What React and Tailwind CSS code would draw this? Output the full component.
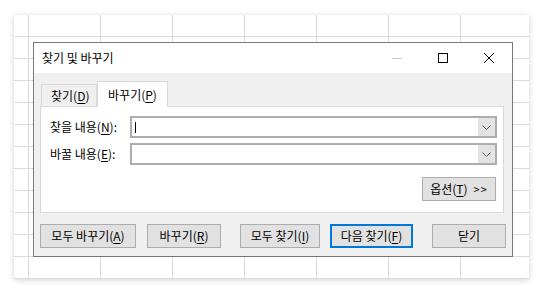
const cells = Array.from({ length: 12 * 8 });

// Underlined access key, like (N)
const Key = ({ k }) => (
  <>
    (<span className="underline underline-offset-[2px]">{k}</span>)
  </>
);

const Combo = ({ cursor }) => (
  <div className="flex h-[22px] w-[368px] border-2 border-[#adadad] bg-white">
    <div className="flex flex-1 items-center pl-[3px]">
      {cursor && <div className="h-[11px] w-px bg-black" />}
    </div>
    <div className="flex w-[17px] items-center justify-center bg-[#e3e3e3]">
      <svg width="9" height="5" viewBox="0 0 9 5">
        <path d="M0.5 0.5 L4.5 4.5 L8.5 0.5" fill="none" stroke="#606060" strokeWidth="1" />
      </svg>
    </div>
  </div>
);

const Button = ({ className, children }) => (
  <button className={`flex h-[24px] items-center justify-center border border-[#adadad] bg-[#e1e1e1] text-[12px] ${className}`}>
    {children}
  </button>
);

const App = () => {
  return (
    <div className="relative h-[295px] w-[545px] overflow-hidden bg-white pl-[14px] pt-[15px] font-['Noto_Sans_CJK_KR',sans-serif] text-black">
      {/* sheet behind the dialog */}
      <div className="h-[264px] w-[515px] overflow-hidden bg-white shadow-[0_1px_6px_rgba(0,0,0,0.18)]">
        <div className="grid grid-cols-[15px_repeat(7,72px)] grid-rows-[repeat(12,22px)]">
          {cells.map((_, i) => (
            <div key={i} className="border-b border-r border-[#dadada]" />
          ))}
        </div>
      </div>

      {/* dialog */}
      <div className="absolute left-[33px] top-[42px] flex h-[215px] w-[480px] flex-col border border-[#777777] bg-[#f0f0f0]">
        <div className="flex h-[30px] items-center bg-white">
          <span className="flex-1 pl-[8px] text-[12px]">찾기 및 바꾸기</span>
          <div className="flex h-full w-[46px] items-center justify-center">
            <div className="h-px w-[10px] bg-[#cccccc]" />
          </div>
          <div className="flex h-full w-[46px] items-center justify-center">
            <div className="h-[10px] w-[10px] border border-black" />
          </div>
          <div className="flex h-full w-[46px] items-center justify-center">
            <svg width="10" height="10" viewBox="0 0 10 10">
              <path d="M0 0 L10 10 M10 0 L0 10" stroke="black" strokeWidth="1" />
            </svg>
          </div>
        </div>

        <div className="flex-1 px-[6px] pt-[8px]">
          {/* tabs */}
          <div className="flex h-[25px] items-end pl-px">
            <div className="flex h-[22px] w-[56px] items-center border border-b-0 border-[#d9d9d9] pl-[9px] text-[12px]">
              찾기<Key k="D" />
            </div>
            <div className="relative z-10 -mb-px flex h-[26px] w-[71px] items-center justify-center border border-b-0 border-[#d9d9d9] bg-white text-[12px]">
              바꾸기<Key k="P" />
            </div>
          </div>

          {/* panel */}
          <div className="flex h-[107px] w-[464px] flex-col border border-[#d9d9d9] bg-white pl-[9px] pr-[6px] pt-[9px]">
            <div className="flex items-center">
              <span className="w-[80px] text-[12px]">찾을 내용<Key k="N" />:</span>
              <Combo cursor />
            </div>
            <div className="mt-[5px] flex items-center">
              <span className="w-[80px] text-[12px]">바꿀 내용<Key k="E" />:</span>
              <Combo />
            </div>
            <div className="mt-[12px] flex justify-end pr-px">
              <button className="flex h-[24px] w-[74px] items-center justify-center gap-[6px] border border-[#adadad] bg-[#e1e1e1] text-[12px]">
                <span>옵션<Key k="T" /></span>
                <span className="text-[11px] tracking-[1px]">&gt;&gt;</span>
              </button>
            </div>
          </div>

          {/* bottom buttons */}
          <div className="mt-[11px] flex">
            <Button className="w-[96px]">모두 바꾸기<Key k="A" /></Button>
            <Button className="ml-[11px] w-[74px]">바꾸기<Key k="R" /></Button>
            <Button className="ml-[19px] w-[80px]">모두 찾기<Key k="I" /></Button>
            <button className="ml-[10px] flex h-[24px] w-[83px] items-center justify-center border-2 border-[#0078d7] bg-[#e1e1e1] text-[12px]">
              다음 찾기<Key k="F" />
            </button>
            <Button className="ml-[19px] w-[74px]">닫기</Button>
          </div>
        </div>
      </div>
    </div>
  );
};

export default App;
